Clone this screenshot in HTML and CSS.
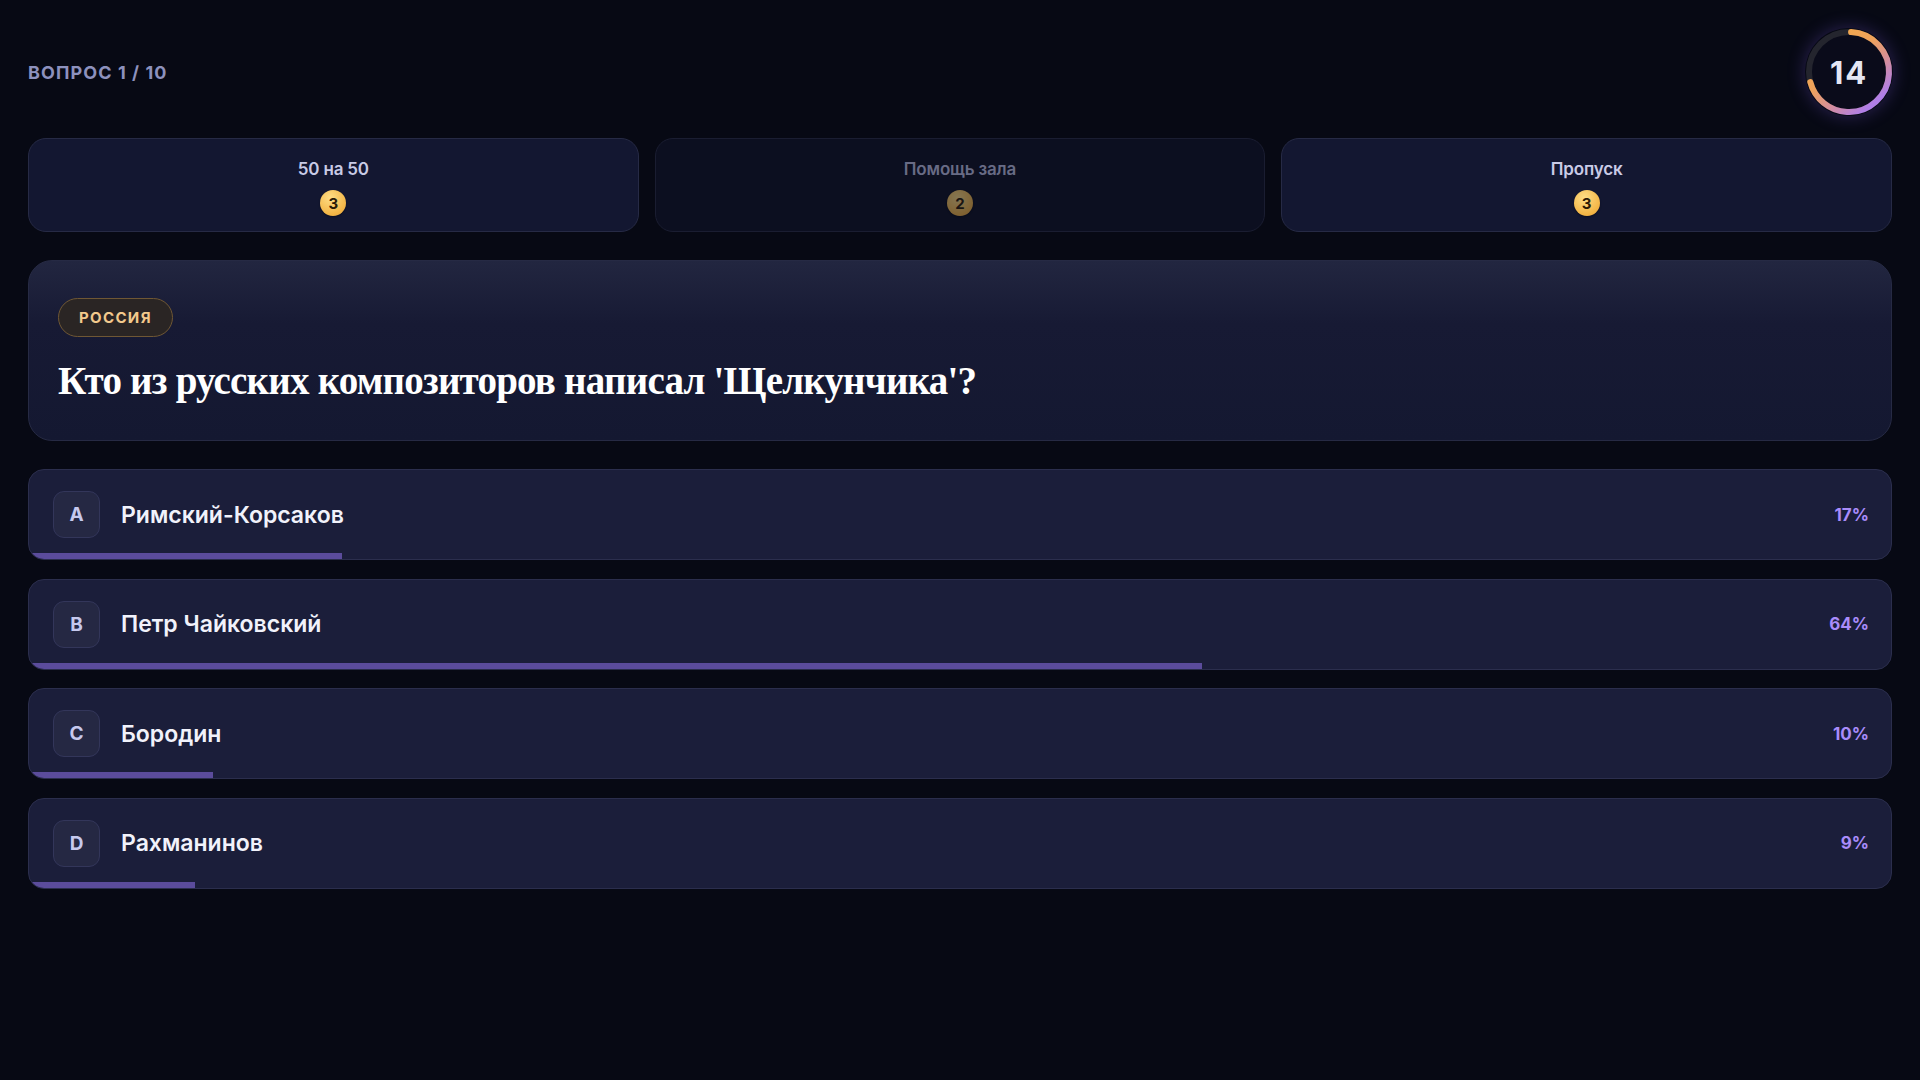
FILE: index.html
```html
<!DOCTYPE html>
<html lang="ru">
<head>
<meta charset="utf-8">
<title>Викторина</title>
<link rel="stylesheet" href="styles.css">
</head>
<body>
<main class="page">
  <header class="top">
    <div class="counter">Вопрос 1 / 10</div>
    <div class="timer">
      <svg class="timer-ring" viewBox="0 0 88 88" width="88" height="88">
        <defs>
          <linearGradient id="ringGrad" x1="0.9" y1="0.15" x2="0.15" y2="0.85">
            <stop offset="0" stop-color="#f4aa4a"/>
            <stop offset="0.4" stop-color="#eea25c"/>
            <stop offset="0.7" stop-color="#d58e9c"/>
            <stop offset="1" stop-color="#b07ee8"/>
          </linearGradient>
        </defs>
        <circle cx="44" cy="44" r="40" fill="#0a0b1a" stroke="#24252e" stroke-width="6"/>
        <circle cx="44" cy="44" r="40" fill="none" stroke="url(#ringGrad)" stroke-width="6"
                stroke-linecap="round" stroke-dasharray="175.9 251.3" transform="rotate(-87 44 44)"/>
      </svg>
      <span class="timer-value">14</span>
    </div>
  </header>

  <section class="lifelines">
    <button class="lifeline">
      <span class="lifeline-name">50 на 50</span>
      <span class="coin">3</span>
    </button>
    <button class="lifeline is-used">
      <span class="lifeline-name">Помощь зала</span>
      <span class="coin">2</span>
    </button>
    <button class="lifeline">
      <span class="lifeline-name">Пропуск</span>
      <span class="coin">3</span>
    </button>
  </section>

  <section class="question-card">
    <span class="tag">Россия</span>
    <h1 class="question">Кто из русских композиторов написал 'Щелкунчика'?</h1>
  </section>

  <section class="answers">
    <div class="answer">
      <span class="letter">A</span>
      <span class="answer-text">Римский-Корсаков</span>
      <span class="pct">17%</span>
      <span class="bar" style="width: 16.8%"></span>
    </div>
    <div class="answer">
      <span class="letter">B</span>
      <span class="answer-text">Петр Чайковский</span>
      <span class="pct">64%</span>
      <span class="bar" style="width: 63%"></span>
    </div>
    <div class="answer">
      <span class="letter">C</span>
      <span class="answer-text">Бородин</span>
      <span class="pct">10%</span>
      <span class="bar" style="width: 9.9%"></span>
    </div>
    <div class="answer">
      <span class="letter">D</span>
      <span class="answer-text">Рахманинов</span>
      <span class="pct">9%</span>
      <span class="bar" style="width: 8.9%"></span>
    </div>
  </section>
</main>
</body>
</html>
```

FILE: styles.css
```css
* {
  box-sizing: border-box;
}

html, body {
  margin: 0;
  padding: 0;
  background: #070914;
  min-height: 100vh;
}

body {
  font-family: Inter, "Noto Sans", "Liberation Sans", sans-serif;
  color: #e8e9f6;
}

.page {
  padding: 0 28px;
}

/* header: question counter + countdown ring */
.top {
  display: flex;
  align-items: center;
  justify-content: space-between;
  padding-top: 28px;
  margin-bottom: 22px;
}

.counter {
  font-size: 18px;
  font-weight: 700;
  letter-spacing: 0.06em;
  text-transform: uppercase;
  color: #8d91bd;
}

.timer {
  position: relative;
  width: 88px;
  height: 88px;
  margin-right: -1px;
  border-radius: 50%;
  box-shadow: 0 0 18px rgba(140, 100, 255, 0.28);
}

.timer-ring {
  display: block;
}

.timer-value {
  position: absolute;
  inset: 0;
  display: flex;
  align-items: center;
  justify-content: center;
  font-size: 31px;
  font-weight: 700;
  letter-spacing: 0.06em;
  color: #e4e6f4;
}

/* lifelines row */
.lifelines {
  display: grid;
  grid-template-columns: repeat(3, 1fr);
  gap: 16px;
}

.lifeline {
  display: flex;
  flex-direction: column;
  align-items: center;
  gap: 10px;
  height: 94px;
  padding: 19px 0 0;
  background: #131731;
  border: 1px solid #262a45;
  border-radius: 18px;
  font-family: inherit;
  cursor: pointer;
}

.lifeline-name {
  font-size: 17px;
  line-height: 22px;
  font-weight: 600;
  color: #c9cbe6;
  letter-spacing: -0.01em;
}

.coin {
  display: flex;
  align-items: center;
  justify-content: center;
  width: 26px;
  height: 26px;
  border-radius: 50%;
  background: radial-gradient(circle at 40% 30%, #fedd86, #f3b545 70%, #e2a03a);
  color: #2a1a06;
  font-size: 15px;
  font-weight: 700;
  box-shadow: 0 1px 2px rgba(0, 0, 0, 0.4);
}

.lifeline.is-used {
  background: #0c0f20;
  border-color: #1a1d31;
}

.lifeline.is-used .lifeline-name {
  color: #686b85;
}

.lifeline.is-used .coin {
  opacity: 0.5;
}

/* question card */
.question-card {
  margin-top: 28px;
  height: 181px;
  padding: 37px 29px 0;
  border-radius: 24px;
  border: 1px solid #262a44;
  background: linear-gradient(180deg, #222640 0%, #171a34 35%, #141831 100%);
}

.tag {
  display: inline-flex;
  align-items: center;
  height: 39px;
  padding: 0 20px;
  border-radius: 999px;
  border: 1.5px solid #6f5734;
  background: #2a2524;
  color: #f2c98c;
  font-size: 15px;
  font-weight: 700;
  letter-spacing: 0.09em;
  text-transform: uppercase;
}

.question {
  margin: 21px 0 0;
  font-family: "Liberation Serif", "DejaVu Serif", serif;
  font-size: 39px;
  line-height: 46px;
  font-weight: 700;
  letter-spacing: -0.02em;
  color: #ffffff;
}

/* answer rows */
.answers {
  display: flex;
  flex-direction: column;
  gap: 18.5px;
  margin-top: 28px;
}

.answer {
  position: relative;
  display: flex;
  align-items: center;
  height: 91px;
  padding: 0 22px 0 24px;
  background: #1b1e3a;
  border: 1px solid #2b2e4d;
  border-radius: 16px;
  overflow: hidden;
}

.letter {
  display: flex;
  align-items: center;
  justify-content: center;
  width: 47px;
  height: 47px;
  border-radius: 11px;
  background: #252843;
  border: 1px solid #33365a;
  color: #c6c9ee;
  font-size: 19px;
  font-weight: 700;
}

.answer-text {
  margin-left: 21px;
  font-size: 23px;
  font-weight: 600;
  color: #f1f2fb;
}

.pct {
  margin-left: auto;
  font-size: 17px;
  font-weight: 700;
  color: #a98cfa;
}

/* vote share strip along the bottom edge of a row */
.bar {
  position: absolute;
  left: 0;
  bottom: 0;
  height: 6px;
  background: #5b4c9c;
}
```
